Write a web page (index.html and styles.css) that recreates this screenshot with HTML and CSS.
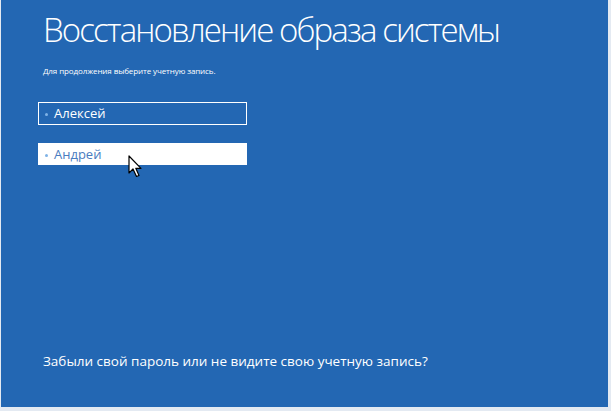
FILE: index.html
```html
<!DOCTYPE html>
<html>
<head>
    <meta charset="UTF-8">
    <title>Восстановление образа системы</title>
    <link rel="stylesheet" href="styles.css">
</head>
<body>

<div id="screen">
    <h1>Восстановление образа системы</h1>
    <p class="hint">Для продолжения выберите учетную запись.</p>

    <ul class="accounts">
        <li class="account">Алексей</li>
        <li class="account active">
            Андрей
            <!-- mouse pointer hovering the second account -->
            <svg class="pointer" width="16" height="24" viewBox="0 0 16 24">
                <path d="M1 1 L1 18 L5 14 L8.5 21.5 L11 20.5 L7.8 13.3 L13 13.3 Z"
                      fill="#fff" stroke="#000" stroke-width="1.2" stroke-linejoin="round"/>
            </svg>
        </li>
    </ul>

    <div class="spacer"></div>

    <p class="forgot">Забыли свой пароль или не видите свою учетную запись?</p>
</div>

</body>
</html>
```

FILE: styles.css
```css
html {
    box-sizing: border-box;
}
*, *:before, *:after {
    box-sizing: inherit;
}

body{
    margin: 0;
    width: 611px;
    height: 411px;
    background-color: #e4eaf2;
    font-family: "Open Sans", "Noto Sans", sans-serif;
    overflow: hidden;
}

#screen{
    margin: 0 3px 4px 1px;
    height: 407px;
    background-color: #2367b3;
    color: #fff;
    padding: 6px 0 0 42px;
    display: flex;
    flex-direction: column;
}

h1{
    margin: 0;
    font-weight: 300;
    font-size: 33px;
    line-height: 48px;
    letter-spacing: -1.9px;
}

.hint{
    margin: 11px 0 0 0;
    font-size: 8px;
    line-height: 12px;
    letter-spacing: -0.1px;
}

.accounts{
    margin: 25px 0 0 -5px;
    padding: 0;
    list-style: none;
    display: flex;
    flex-direction: column;
    gap: 18px;
    width: 209px;
}

.account{
    position: relative;
    height: 23px;
    border: 1px solid #fff;
    padding-left: 15px;
    font-size: 13px;
    line-height: 21px;
}

.account:before{
    content: "";
    position: absolute;
    left: 6px;
    top: 10px;
    width: 3px;
    height: 3px;
    border-radius: 50%;
    background-color: #7fb2e6;
}

.account.active{
    height: 22px;
    background-color: #fff;
    color: #4a7cc0;
    line-height: 20px;
}

.pointer{
    position: absolute;
    left: 89px;
    top: 11px;
}

.spacer{
    flex: 1;
}

.forgot{
    margin: 0 0 37px 0;
    font-size: 13.5px;
    line-height: 18px;
}
```
